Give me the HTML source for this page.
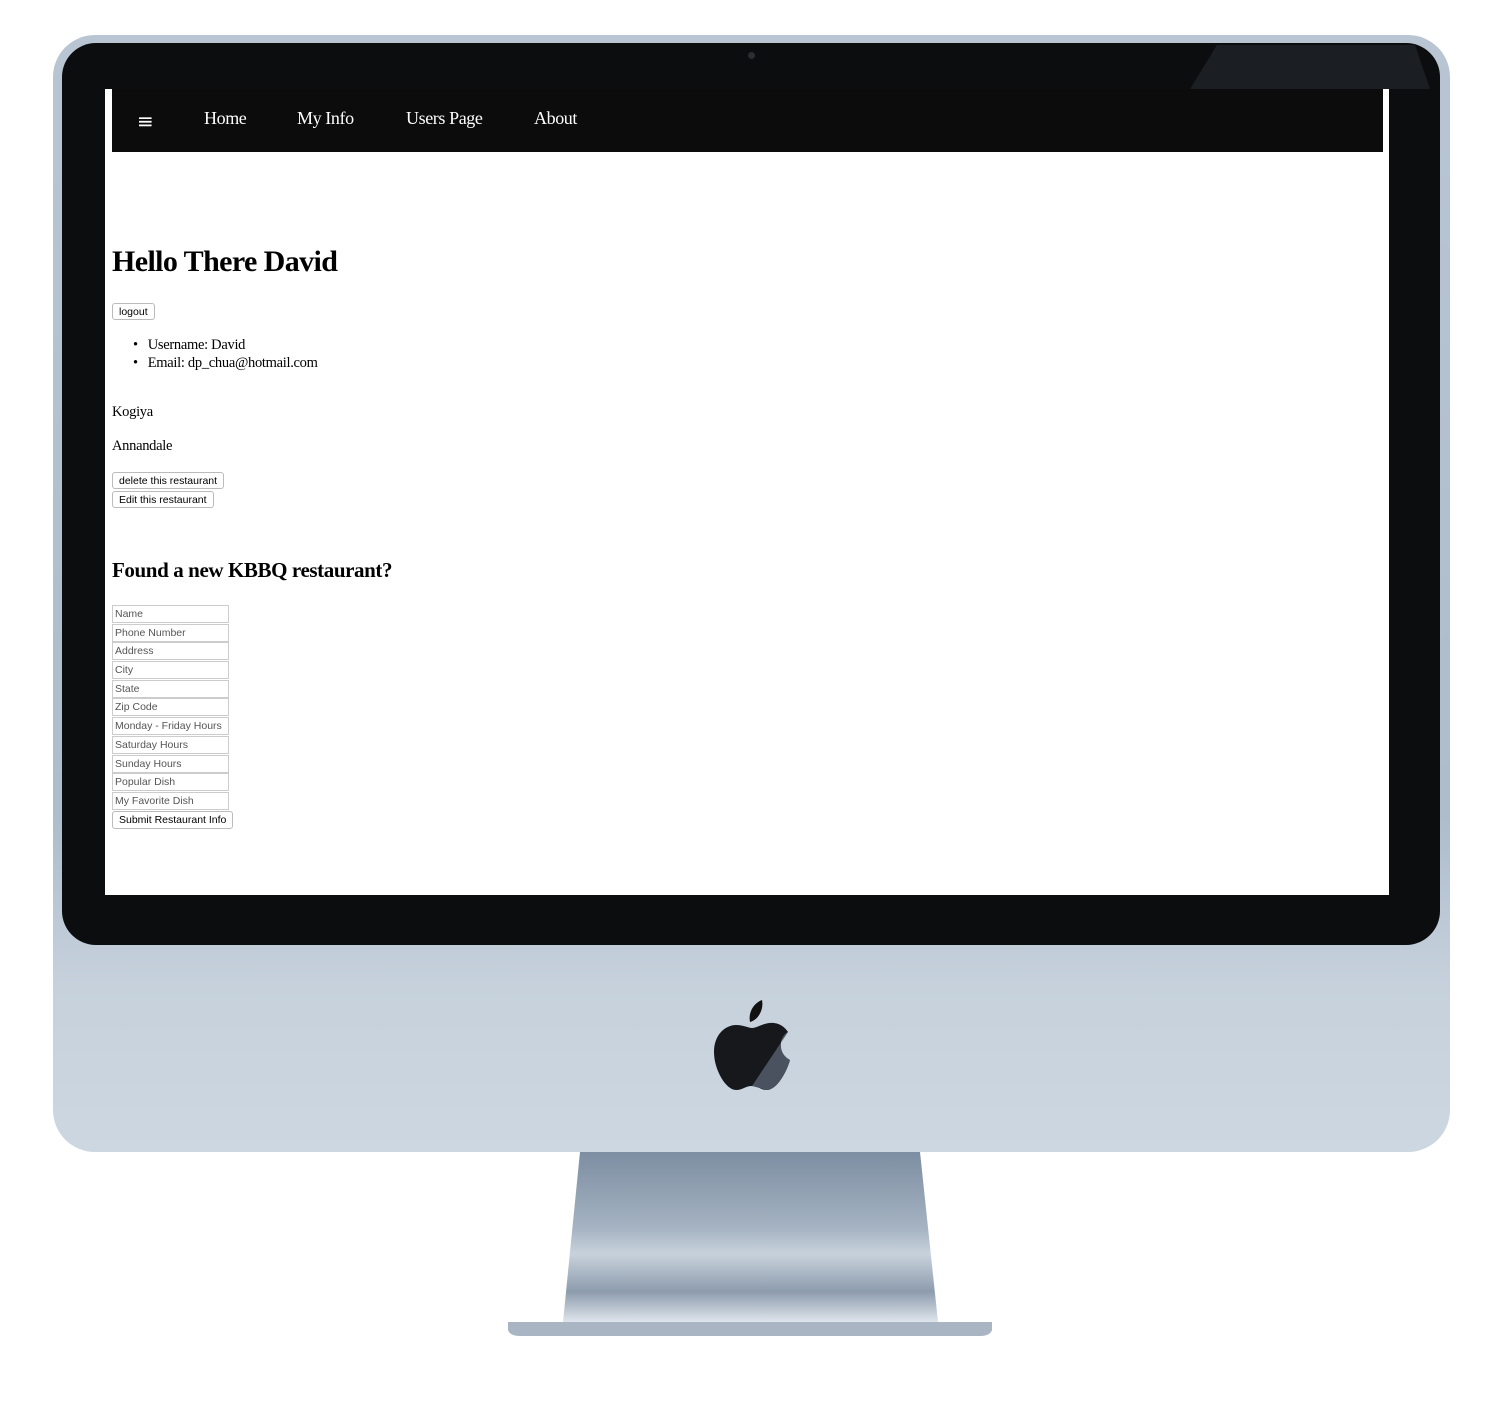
<!DOCTYPE html>
<html><head><style>
*{margin:0;padding:0;box-sizing:border-box}
body{width:1500px;height:1401px;background:#fff;position:relative;overflow:hidden;font-family:"Liberation Serif",serif}
.abs{position:absolute}
.frame{left:53px;top:35px;width:1397px;height:1117px;border-radius:42px;background:linear-gradient(180deg,#b9c5d2 0%,#aebccb 70%,#c6d1dc 85%,#cdd7e1 100%)}
.bezel{left:62px;top:43px;width:1378px;height:902px;border-radius:34px;background:#0c0d0f}
.screen{left:105px;top:89px;width:1284px;height:806px;background:#fff}
.nav{left:112px;top:89px;width:1271px;height:63px;background:#0c0c0c;color:#fff;font-size:18px;letter-spacing:-0.4px}
.nav span{position:absolute;top:19px}
.btn{position:absolute;left:112px;height:17px;border:1px solid #bbb;border-radius:3px;background:#fff;font:10.5px "Liberation Sans",sans-serif;padding:1px 6px 0;line-height:14px}
.inp{position:absolute;left:112px;width:117px;height:18px;border:1px solid #ccc;font:10.5px "Liberation Sans",sans-serif;color:#555;padding-left:2px;line-height:17px;white-space:nowrap;overflow:hidden}
.t{position:absolute;font-size:14.5px;color:#000;letter-spacing:-0.3px}
</style></head><body>
<div class="abs frame"></div>
<div class="abs bezel"></div>
<svg class="abs" style="left:1190px;top:45px" width="240" height="44"><polygon points="27,0 225,0 240,44 0,44" fill="#1b1e23"/></svg>
<div class="abs" style="left:748px;top:52px;width:7px;height:7px;border-radius:50%;background:#2a2d33"></div>
<div class="abs screen"></div>
<div class="abs nav">
<span style="left:25px;top:20px;font-size:20px;font-family:'DejaVu Sans',sans-serif">≡</span>
<span style="left:92px">Home</span>
<span style="left:185px">My Info</span>
<span style="left:294px">Users Page</span>
<span style="left:422px">About</span>
</div>
<div class="abs" style="left:112px;top:245px;font-size:30px;font-weight:bold;letter-spacing:-0.6px">Hello There David</div>
<div class="btn" style="top:303px">logout</div>
<div class="t" style="left:133px;top:337px">•&nbsp;&nbsp;&nbsp;Username: David</div>
<div class="t" style="left:133px;top:355px">•&nbsp;&nbsp;&nbsp;Email: dp_chua@hotmail.com</div>
<div class="t" style="left:112px;top:404px">Kogiya</div>
<div class="t" style="left:112px;top:438px">Annandale</div>
<div class="btn" style="top:472px">delete this restaurant</div>
<div class="btn" style="top:491px">Edit this restaurant</div>
<div class="abs" style="left:112px;top:558px;font-size:21px;font-weight:bold;letter-spacing:-0.4px">Found a new KBBQ restaurant?</div>
<div class="inp" style="top:605px">Name</div>
<div class="inp" style="top:624px">Phone Number</div>
<div class="inp" style="top:642px">Address</div>
<div class="inp" style="top:661px">City</div>
<div class="inp" style="top:680px">State</div>
<div class="inp" style="top:698px">Zip Code</div>
<div class="inp" style="top:717px">Monday - Friday Hours</div>
<div class="inp" style="top:736px">Saturday Hours</div>
<div class="inp" style="top:755px">Sunday Hours</div>
<div class="inp" style="top:773px">Popular Dish</div>
<div class="inp" style="top:792px">My Favorite Dish</div>
<div class="btn" style="top:811px;height:18px">Submit Restaurant Info</div>
<svg class="abs" style="left:500px;top:1150px" width="500" height="190">
<defs><linearGradient id="g" x1="0" y1="0" x2="0" y2="1">
<stop offset="0" stop-color="#7d8ea2"/><stop offset="0.45" stop-color="#a5b3c2"/><stop offset="0.6" stop-color="#c8d2dc"/><stop offset="0.82" stop-color="#8d9cad"/><stop offset="1" stop-color="#dfe5ec"/></linearGradient></defs>
<polygon points="80,2 420,2 438,172 63,172" fill="url(#g)"/>
<path d="M8,172 H492 V180 Q490,186 480,186 H20 Q10,186 8,180Z" fill="#a9b5c2"/>
</svg>
<svg class="abs" style="left:712px;top:998px" width="80" height="96" viewBox="0 0 80 96">
<path d="M50,2 C52,12 46,22 38,24 C36,14 42,5 50,2Z" fill="#111"/>
<path d="M40,30 C46,30 52,24 62,25 C70,26 74,31 76,34 C66,40 66,56 78,62 C74,76 64,92 55,92 C48,92 47,88 40,88 C33,88 31,92 24,92 C14,92 2,72 2,54 C2,36 14,27 24,27 C32,27 36,30 40,30Z" fill="#16181c"/>
<path d="M76,34 C66,40 66,56 78,62 C74,76 64,92 55,92 L40,88 Z" fill="#4a5260"/>
</svg>
</body></html>
